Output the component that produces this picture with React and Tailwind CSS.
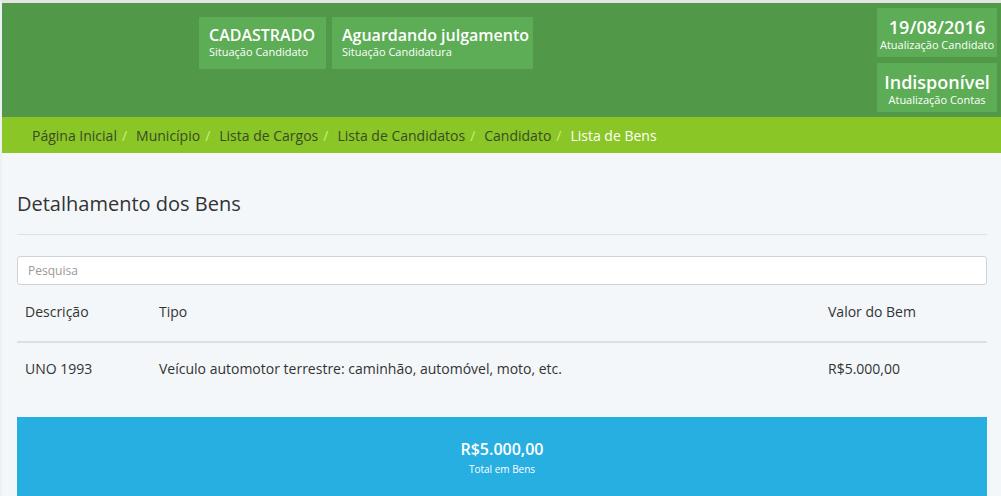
import React from 'react';

const crumbs = ['Página Inicial', 'Município', 'Lista de Cargos', 'Lista de Candidatos', 'Candidato'];

const Tile = ({ title, label, className = '', titleClass = 'text-[16px] leading-[20px]' }) => (
  <div className={`bg-[#5cad55] text-white ${className}`}>
    <div className={`font-semibold ${titleClass}`}>{title}</div>
    <div className="text-[11px] leading-[13px]">{label}</div>
  </div>
);

export default function App() {
  return (
    <div className="min-h-[496px] bg-[#f4f7f9] border-t-[3px] border-[#e4e4e4] border-l-2 border-l-[#eef1f3] font-['Open_Sans',sans-serif] text-[#333]">
      {/* Header */}
      <div className="h-[114px] bg-[#519848] flex">
        <div className="flex gap-[6px] pl-[197px] pt-[14px]">
          <Tile title="CADASTRADO" label="Situação Candidato" className="w-[127px] h-[52px] pl-[10px] pt-[8px]" />
          <Tile title="Aguardando julgamento" label="Situação Candidatura" className="w-[201px] h-[52px] pl-[10px] pt-[8px]" />
        </div>
        <div className="ml-auto pr-[4px] pt-[5px] flex flex-col gap-[6px]">
          <Tile
            title="19/08/2016"
            label="Atualização Candidato"
            titleClass="text-[18px] leading-[22px]"
            className="w-[120px] h-[49px] pt-[8px] text-center"
          />
          <Tile
            title="Indisponível"
            label="Atualização Contas"
            titleClass="text-[18px] leading-[22px]"
            className="w-[120px] h-[49px] pt-[8px] text-center"
          />
        </div>
      </div>

      {/* Breadcrumb */}
      <div className="h-[36px] bg-[#8ac626] flex items-center pl-[30px] text-[14px]">
        {crumbs.map((c) => (
          <React.Fragment key={c}>
            <span className="text-[#3b4a26]">{c}</span>
            <span className="text-[#c9ef80] pl-[5px] pr-[9px]">/</span>
          </React.Fragment>
        ))}
        <span className="text-white">Lista de Bens</span>
      </div>

      {/* Content */}
      <div className="px-[15px] pr-[14px]">
        <h2 className="pt-[37px] text-[20px] leading-[28px] text-[#333]">Detalhamento dos Bens</h2>
        <div className="mt-[16px] border-t border-[#dde1e4]" />
        <input
          placeholder="Pesquisa"
          className="mt-[21px] w-full h-[29px] bg-white border border-[#cfd3d6] rounded-[3px] px-[10px] text-[12px] placeholder:text-[#999] outline-none"
        />

        <table className="w-full mt-[6px] text-[14px] leading-[20px] border-collapse">
          <thead>
            <tr className="border-b-2 border-[#dddfe1]">
              <th className="w-[134px] text-left font-normal px-[8px] pt-[11px] pb-[19px]">Descrição</th>
              <th className="text-left font-normal px-[8px] pt-[11px] pb-[19px]">Tipo</th>
              <th className="w-[167px] text-left font-normal px-[8px] pt-[11px] pb-[19px]">Valor do Bem</th>
            </tr>
          </thead>
          <tbody>
            <tr>
              <td className="px-[8px] pt-[16px] pb-[18px]">UNO 1993</td>
              <td className="px-[8px] pt-[16px] pb-[18px]">Veículo automotor terrestre: caminhão, automóvel, moto, etc.</td>
              <td className="px-[8px] pt-[16px] pb-[18px]">R$5.000,00</td>
            </tr>
          </tbody>
        </table>

        <div className="mt-[20px] h-[90px] bg-[#28afe2] text-white text-center pt-[21px]">
          <div className="text-[16px] font-semibold leading-[22px]">R$5.000,00</div>
          <div className="text-[10px] leading-[14px] mt-[2px]">Total em Bens</div>
        </div>
      </div>
    </div>
  );
}
